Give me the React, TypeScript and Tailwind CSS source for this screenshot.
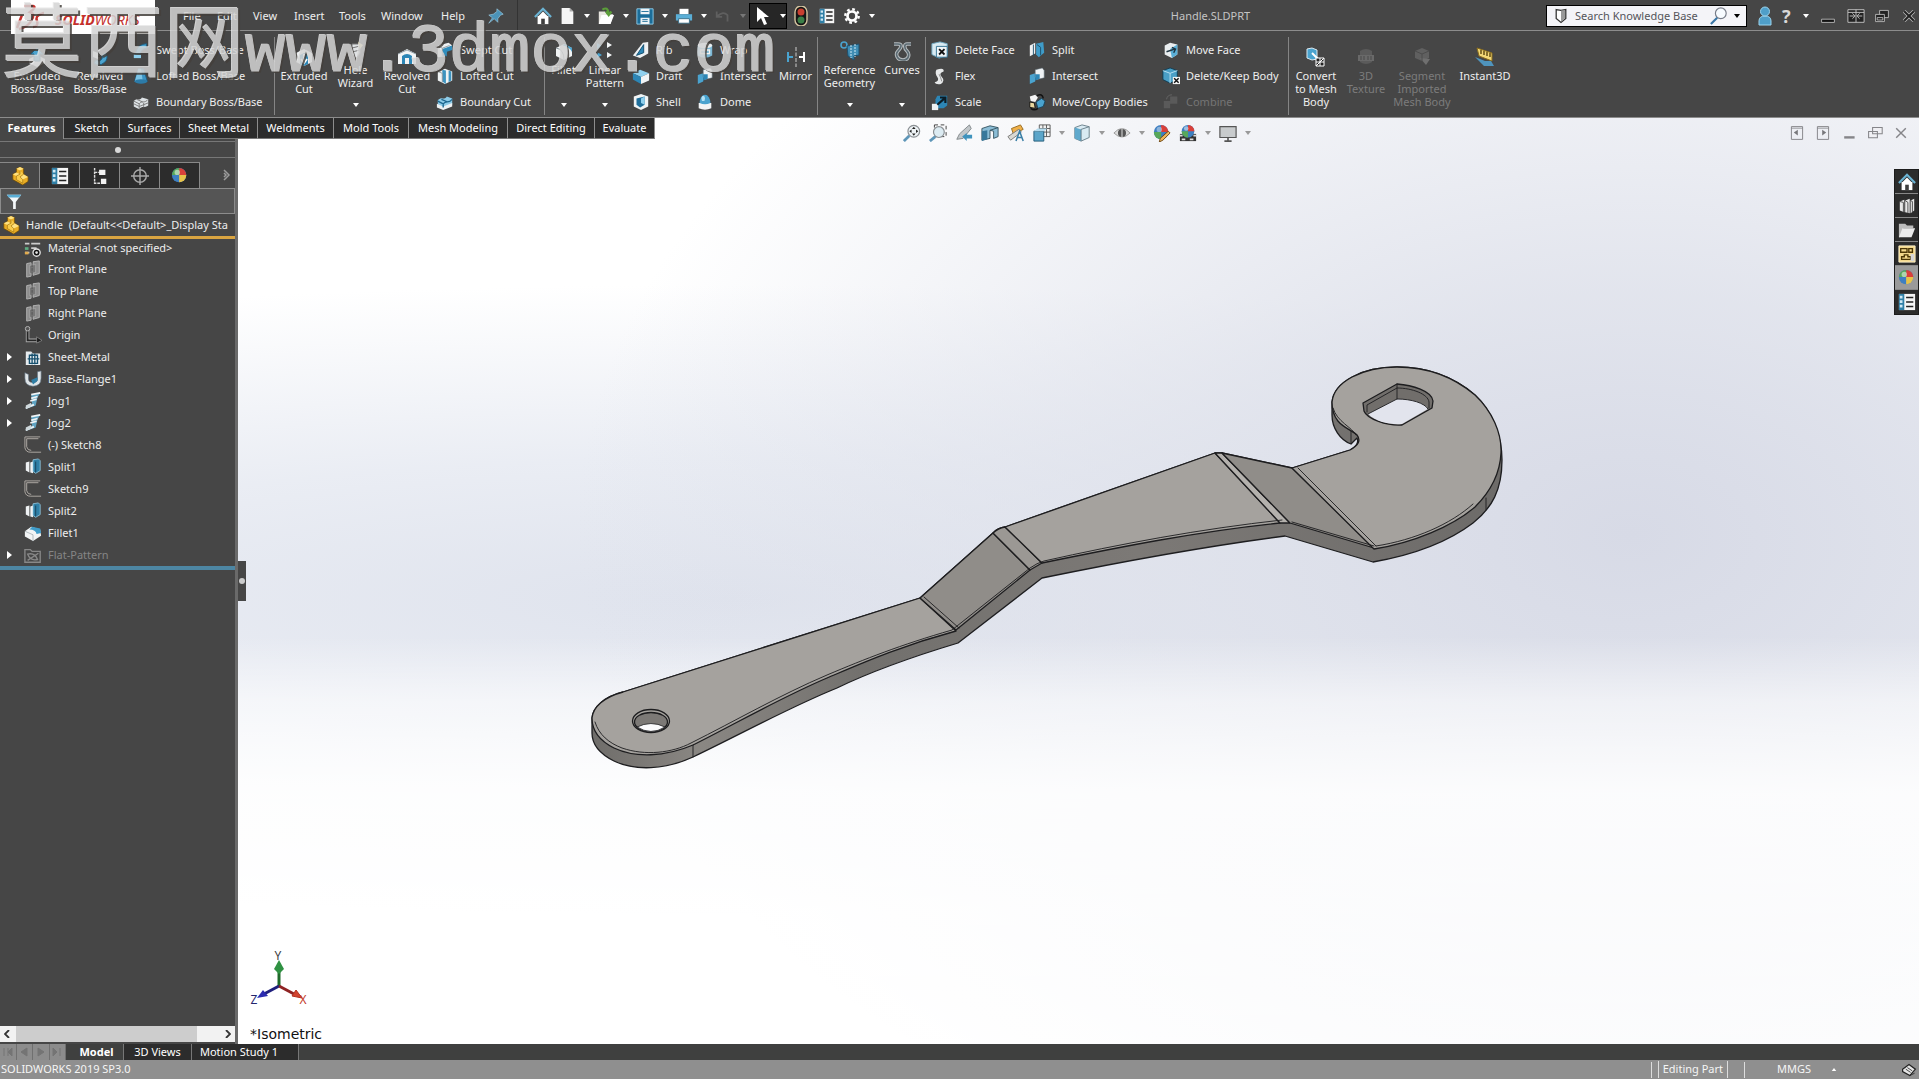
import React from "react";

const ICONS: Record<string, React.ReactNode> = {
  extrude: (
    <>
      <path d="M2 12l8-4 8 4v4l-8 4-8-4z" fill="#e9edf0" />
      <path d="M10 1l6 6h-3v7H7V7H4z" fill="#4aa3cf" stroke="#1c5f83" />
    </>
  ),
  revolve: (
    <>
      <path d="M4 16a8 8 0 0 0 12-10l-4 2a4 4 0 0 1-6 5z" fill="#4aa3cf" stroke="#1c5f83" />
      <path d="M9 1v18" stroke="#dff0f8" strokeDasharray="3 1.5" />
      <path d="M3 4l5 2v6l-5-2z" fill="#eef2f4" />
    </>
  ),
  sweep: (
    <>
      <path d="M4 17c0-9 4-13 12-14v5c-5 1-7 4-7 10z" fill="#4aa3cf" stroke="#1c5f83" />
      <path d="M2 15h8v4H2z" fill="#8fd0ee" />
    </>
  ),
  loft: (
    <>
      <path d="M7 2h6l4 14H3z" fill="#3b94c4" stroke="#1c5f83" />
      <path d="M10 2l2 14H3l4-14z" fill="#7cc4e6" />
      <ellipse cx="10" cy="16" rx="7" ry="2.5" fill="#2c7ba8" />
    </>
  ),
  boundary: (
    <>
      <path d="M2 9c4-5 6 1 9-4l7 2v7c-4 3-7 0-10 4l-6-3z" fill="#dde2e5" />
      <path d="M2 9l6 3c3-4 6 0 10-5M8 12v6M5 7l7 3M13 11v5M2 12l6 3 10-4" stroke="#777" fill="none" />
    </>
  ),
  extrudeCut: (
    <>
      <path d="M2 6l8-4 8 4v9l-8 4-8-4z" fill="#eef1f3" />
      <path d="M6 17V8l4-2 4 2v9l-4 2z" fill="#2c86b6" />
      <path d="M10 7v8M7 12l3 4 3-4" stroke="#fff" strokeWidth="2" fill="none" />
    </>
  ),
  hole: (
    <>
      <path d="M6 3h8v9l-4 6-4-6z" fill="#dfe2e4" stroke="#777" />
      <path d="M6 7l8-2M6 11l8-2" stroke="#777" />
      <path d="M12 1l5 3-3 4z" fill="#e6d894" />
    </>
  ),
  revolveCut: (
    <>
      <path d="M1 7l9-5 9 5v10h-4v-6h-2v6H7v-6H5v6H1z" fill="#f2f4f5" />
      <path d="M5 17V9q5-4 10 0v8h-3v-6H8v6z" fill="#2c86b6" />
      <path d="M1 7l9-4 9 4" stroke="#97a4ab" fill="none" />
    </>
  ),
  sweptCut: (
    <>
      <path d="M2 5l12-3 4 3-6 3-1 9-9 1z" fill="#eef1f3" />
      <path d="M7 17V9l11-4v5l-6 2v5z" fill="#2f8dbd" />
      <path d="M2 5l5 3v9M7 8l8-3" stroke="#8a969c" fill="none" />
    </>
  ),
  loftCut: (
    <>
      <path d="M2 5l8-3 8 3v10l-8 4-8-4z" fill="#f0f3f4" />
      <path d="M7 3l4 1v15l-4-3zM14 4l3 1v10l-3 2z" fill="#3d93bf" />
      <path d="M2 5l5 2v10" stroke="#8d999e" fill="none" />
    </>
  ),
  boundaryCut: (
    <>
      <path d="M2 8c5-5 7 1 10-4l6 2v7c-4 3-7 0-10 4l-6-3z" fill="#8dcbe8" />
      <path d="M1 12l7 3 10-4v4l-10 4-7-3z" fill="#eef1f3" />
      <path d="M2 9l6 3c3-4 6 0 10-5M6 7l7 3M8 12v4" stroke="#1e678f" fill="none" strokeWidth="1.5" />
    </>
  ),
  fillet: (
    <>
      <path d="M2 7l8-4 8 4v8l-8 4-8-4z" fill="#f1f4f5" />
      <path d="M8 4l3-1 7 4v4q-2-5-10-7z" fill="#4aa3cf" />
      <path d="M2 7q8 1 8 12" stroke="#8a969c" fill="none" />
    </>
  ),
  linear: (
    <>
      <path d="M2 2l5 3-5 3zM2 11l5 3-5 3z" fill="#4aa3cf" />
      <path d="M12 1l5 3-5 3zM12 11l5 3-5 3z" fill="#f4f6f7" />
    </>
  ),
  rib: (
    <>
      <path d="M12 2l6-1v13l-9 5-8-3z" fill="#eef1f3" />
      <path d="M13 4v9l-8 3z" fill="#2c86b6" stroke="#0f4a6a" />
    </>
  ),
  draft: (
    <>
      <path d="M1 7l8-4 10 4-9 4z" fill="#8fd0ee" />
      <path d="M1 7l9 4v8l-9-5z" fill="#2c86b6" />
      <path d="M10 11l9-4v8l-9 4z" fill="#f1f4f5" />
    </>
  ),
  shell: (
    <>
      <path d="M2 4l8-3 8 3v11l-8 4-8-4z" fill="#f1f4f5" />
      <path d="M5 6l9-2v9l-5 3-4-3z" fill="#1f6f9b" />
      <path d="M10 6l4-2v9l-4-2z" fill="#8fd0ee" />
    </>
  ),
  wrap: (
    <>
      <path d="M2 5h16v11q-8 5-16 0z" fill="#7db9d6" />
      <ellipse cx="10" cy="5" rx="8" ry="3" fill="#e8edf0" />
      <path d="M5 10h10v4H5z" fill="none" stroke="#f5f5f5" strokeWidth="1.5" />
    </>
  ),
  intersect: (
    <>
      <path d="M2 9l6-2v9l-6 3z" fill="#4aa3cf" />
      <path d="M8 3l8-2 2 3v8l-8 2-2-3z" fill="#eff2f4" stroke="#5b6b73" strokeWidth=".6" />
      <path d="M8 8h5v5l-5 2z" fill="#2c86b6" />
    </>
  ),
  dome: (
    <>
      <path d="M3 11h14v6q-7 3-14 0z" fill="#f2f4f5" />
      <path d="M4 11a6 9 0 0 1 12 0q-6 3-12 0z" fill="#4aa3cf" />
      <ellipse cx="8" cy="6" rx="2" ry="3" fill="#b4e2f5" />
    </>
  ),
  mirror: (
    <>
      <path d="M1 5h2v4h4v2H3v4H1z" fill="#4aa3cf" />
      <path d="M19 5h-2v4h-4v2h4v4h2z" fill="#fff" />
      <path d="M10 0v20" stroke="#ccc" strokeDasharray="4 1.5" />
    </>
  ),
  refgeo: (
    <>
      <circle cx="4" cy="4" r="3" fill="none" stroke="#4aa3cf" strokeWidth="1.6" />
      <path d="M7 5l12-2v11l-5 1v4l-6-4z" fill="#3f8db4" stroke="#1d5170" />
      <path d="M11 4v13M15 3v13" stroke="#cfe9f5" strokeDasharray="2 1" />
    </>
  ),
  curves: (
    <>
      <path d="M2 3h4c5 0 3 4 0 7s-1 9 5 9 7-6 4-9-3-7 0-7h4" fill="none" stroke="#b5bbbe" strokeWidth="3.6" />
      <path d="M2 3h4c5 0 3 4 0 7s-1 9 5 9 7-6 4-9-3-7 0-7h4" fill="none" stroke="#5b6a72" strokeWidth="1.6" />
    </>
  ),
  deleteFace: (
    <>
      <path d="M1 3l9-2 8 2v13l-9 3-8-4z" fill="#d8eaf2" stroke="#6fa9c4" />
      <path d="M6 6h12v12H6z" fill="#eef4f7" stroke="#2c6d8f" />
      <path d="M9 9l6 6M15 9l-6 6" stroke="#111" strokeWidth="2" />
    </>
  ),
  flex: (
    <>
      <path d="M6 3q9-3 8 2-6 2-2 6t-1 8q-6 1-7-2 6-2 3-6T6 3z" fill="#e6e8e9" />
      <path d="M9 8q2 4 3 8" stroke="#888" fill="none" />
    </>
  ),
  scale: (
    <>
      <path d="M7 3h11v11l-4 3H5V7z" fill="#2c86b6" />
      <path d="M1 12h7v7H1z" fill="#eef1f3" />
      <path d="M7 13l8-7M10 5h6v6" stroke="#0b1c26" strokeWidth="2.4" fill="none" />
    </>
  ),
  split: (
    <>
      <path d="M2 5l6-3v12l-6 3z" fill="#eef1f3" />
      <path d="M9 3l8-2 1 12-6 5-3-3z" fill="#3f9cc9" />
      <path d="M10 4l4 3v9M6 4v12" stroke="#1b4e69" fill="none" />
    </>
  ),
  moveBodies: (
    <>
      <path d="M2 4l6-2 3 3-3 5-5-1z" fill="#f5f5f5" />
      <path d="M9 10l6-4 4 3-2 6-6 2z" fill="#4aa3cf" stroke="#17435a" />
      <path d="M2 10l5 1 1 6-6-1z" fill="#e8d7a0" stroke="#111" />
      <path d="M10 3q6-3 7 3M3 17q4 3 8 0" stroke="#111" strokeWidth="1.6" fill="none" />
    </>
  ),
  moveFace: (
    <>
      <path d="M3 5l6-3 8 2v11l-6 4-8-4z" fill="#e9edef" />
      <path d="M9 9l8-5v11l-6 4z" fill="#5aaed6" />
      <path d="M5 12l9-3M11 7l4 2-2 4" stroke="#1d3441" strokeWidth="1.6" fill="none" />
    </>
  ),
  keepBody: (
    <>
      <path d="M1 4l8-3 8 3v10l-8 4-8-4z" fill="#4a9fc6" stroke="#0f3c54" />
      <path d="M1 4l8 3 8-3M9 7v11" stroke="#bfe4f4" fill="none" />
      <path d="M12 11h8v8h-8z" fill="#f5f5f5" />
      <path d="M13.500 12.500l5 5M18.500 12.500l-5 5" stroke="#111" strokeWidth="1.600" />
    </>
  ),
  combine: (
    <>
      <path d="M2 9h7v8H2zM9 4h8v8H9z" fill="#5a5a5a" />
      <path d="M5 7q1-5 6-5" stroke="#666" fill="none" />
    </>
  ),
  convert: (
    <>
      <path d="M1 2l5-1 5 2v9l-5 1-5-2z" fill="#4aa3cf" stroke="#dceaf1" />
      <path d="M6 6l6 6" stroke="#fff" strokeWidth="2" />
      <path d="M10 11h8v8h-8z" fill="#222" stroke="#fff" />
      <path d="M10 19l8-8M14 11v8M10 15h8" stroke="#fff" />
    </>
  ),
  texture: (
    <>
      <path d="M4 4q6-4 12 0v11q-6 4-12 0z" fill="#5b5b5b" />
      <path d="M2 8h16v6H2z" fill="#696969" />
      <path d="M5 9v4M8 9v4M12 9v4M15 9v4" stroke="#4a4a4a" />
    </>
  ),
  segment: (
    <>
      <path d="M3 4l7-3 7 3v7l-7 3-7-3z" fill="#606060" />
      <path d="M8 11l6 7 4-6z" fill="#6f6f6f" />
      <path d="M3 4l7 3 7-3M10 7v7" stroke="#4c4c4c" fill="none" />
    </>
  ),
  instant: (
    <>
      <path d="M2 1l15 5v8L4 9z" fill="#f2d877" stroke="#8a6d1c" />
      <path d="M6 3v4M9 4v4M12 5v4M15 6v4" stroke="#5b450b" strokeWidth="1.4" />
      <path d="M0 10l10 4h6l3 5H9l-5-5z" fill="#4f94bd" />
    </>
  ),
  home: (
    <>
      <path d="M4 10h12v9H4z" fill="#fff" />
      <path d="M4 11l6-6 6 6z" fill="#fff" />
      <path d="M1 11l9-9 9 9" fill="none" stroke="#6bb3d3" strokeWidth="2.400" />
      <path d="M8 13h4v6H8z" fill="#3e3e3e" />
    </>
  ),
  doc: (
    <>
      <path d="M4 1h9l4 4v14H4z" fill="#f5f5f5" />
      <path d="M13 1v4h4" fill="#aaa" />
    </>
  ),
  open: (
    <>
      <path d="M2 5h7l2 3h7l-3 11H2z" fill="#e8e6e0" />
      <path d="M5 9h14l-4 10H2z" fill="#fff" />
      <path d="M6 3q6-4 7 4M10 5l3 4 3-4" stroke="#5b9e3a" strokeWidth="2.4" fill="none" />
    </>
  ),
  save: (
    <>
      <path d="M1 2h18v17H1z" fill="#1b6d99" stroke="#8fd0ee" />
      <path d="M5 2h10v6H5zM5 12h10v7H5z" fill="#eef3f6" />
      <path d="M7 14h6M7 16h6M6 5h8" stroke="#1b6d99" />
    </>
  ),
  print: (
    <>
      <path d="M5 2h10v6H5z" fill="#fff" />
      <path d="M1 8h18v7H1z" fill="#5aaed6" />
      <path d="M4 13h12v5H4z" fill="#fff" stroke="#356d87" />
    </>
  ),
  undo: <path d="M3 5v6h6M4 10q6-6 11-1v7" stroke="#5f5f5f" strokeWidth="2" fill="none" />,
  cursor: <path d="M5 1v15l4-4 3 7 3-1-3-7h5z" fill="#fff" />,
  traffic: (
    <>
      <rect x="4" y="0" width="12" height="20" rx="6" fill="#161616" stroke="#d3c49f" strokeWidth="1.400" />
      <circle cx="10" cy="6" r="3.5" fill="#c93f30" />
      <circle cx="10" cy="14" r="3.5" fill="#3b7f47" />
    </>
  ),
  list: (
    <>
      <path d="M1 1h18v18H1z" fill="#f5f5f5" />
      <path d="M1 1h6v18H1z" fill="#2f7fa6" />
      <path d="M2 3h3v3H2zM2 8h3v3H2zM2 13h3v3H2z" fill="#cfe8f3" />
      <path d="M9 5h8M9 10h8M9 15h8" stroke="#222" strokeWidth="1.600" />
    </>
  ),
  gear: (
    <>
      <circle cx="10" cy="10" r="5" fill="none" stroke="#fff" strokeWidth="3" />
      <circle cx="10" cy="10" r="7.500" fill="none" stroke="#fff" strokeWidth="2.600" strokeDasharray="3 2.890" />
    </>
  ),
  pin: <path d="M11 2l7 6-3 1-3 4 0 4-4-4-6 5 4-6-4-3 5-1 4-3z" fill="#4b93b8" stroke="#9fcfe5" strokeWidth=".7" />,
  user: (
    <>
      <path d="M4 19v-4q0-5 6-5t6 5v4z" fill="#4f9fc9" stroke="#9bd4ee" />
      <circle cx="10" cy="5.500" r="4.500" fill="#4f9fc9" stroke="#9bd4ee" />
    </>
  ),
  minimize: <path d="M2 14h16v4H2z" fill="#111" stroke="#ccc" />,
  span: (
    <>
      <path d="M1 3h18v14H1z" fill="#222" stroke="#c8c8c8" />
      <path d="M10 3v14M3 10h5M17 10h-5M6 7l3 3-3 3M14 7l-3 3 3 3M1 6h18" stroke="#c8c8c8" fill="none" />
    </>
  ),
  restore: (
    <>
      <path d="M7 3h11v9H7z" fill="#222" stroke="#ccc" />
      <path d="M2 8h11v9H2z" fill="#222" stroke="#ccc" />
      <path d="M4 12h7v3H4z" fill="none" stroke="#ccc" />
    </>
  ),
  close: (
    <>
      <path d="M4 4l12 12M16 4L4 16" stroke="#bbb" strokeWidth="4.500" />
      <path d="M4 4l12 12M16 4L4 16" stroke="#222" strokeWidth="2.500" />
    </>
  ),
  shield: (
    <>
      <path d="M4 2l6 1 6-1v11l-6 5-6-5z" fill="#fff" stroke="#333" strokeWidth="1.600" />
      <path d="M10 3v14l5-4V3z" fill="#999" />
    </>
  ),
  magnifier: (
    <>
      <circle cx="12" cy="7" r="6" fill="#f7fbff" stroke="#777c88" strokeWidth="1.300" />
      <path d="M8 12l-7 7" stroke="#3a76a6" strokeWidth="2.400" />
    </>
  ),
  zoomFit: (
    <>
      <circle cx="12" cy="8" r="6.500" fill="#eef3f6" stroke="#8a8f93" strokeWidth="1.300" />
      <path d="M12 3l2 2.500h-4zM12 13l2-2.500h-4zM7 8l2.500-2v4zM17 8l-2.500-2v4z" fill="#222" />
      <path d="M7 13l-6 6" stroke="#5e96b8" strokeWidth="3" />
    </>
  ),
  zoomArea: (
    <>
      <path d="M6 1h13v13H6z" fill="none" stroke="#333" strokeDasharray="4 3" />
      <circle cx="11" cy="9" r="6" fill="#dcebf2" stroke="#8a8f93" strokeWidth="1.300" />
      <path d="M7 14l-6 5" stroke="#5e96b8" strokeWidth="3" />
    </>
  ),
  prevView: (
    <>
      <path d="M16 1l2 4-9 11-7 1 3-6z" fill="#c2c7ca" stroke="#7e8487" />
      <path d="M19 12v4h-6v3l-5-5 5-4v2z" fill="#3f93bd" />
    </>
  ),
  section: (
    <>
      <path d="M1 5l9-3 9 2v10l-5 2v-8l-4-1v9l-9 2z" fill="#8bbdd6" stroke="#33515f" />
      <path d="M1 8l6-1v10l-6 2z" fill="#38789b" />
      <path d="M10 7l9-3" stroke="#33515f" />
    </>
  ),
  dynamic: (
    <>
      <path d="M5 5l10-4 3 5-11 5z" fill="#efb049" stroke="#94661a" />
      <path d="M1 14l12-8 3 3-12 9z" fill="#d8d8d3" stroke="#777" />
      <path d="M10 19l4-11 4 11M11.500 15h5" stroke="#3a7fa6" fill="none" strokeWidth="1.700" />
    </>
  ),
  orient: (
    <>
      <path d="M7 1h12v13H7zM7 5h12M7 9h12M11 1v13M15 1v13" fill="#f2f2f2" stroke="#555" />
      <path d="M1 8h11v11H1z" fill="#5ba5c9" stroke="#235a77" />
      <path d="M1 8l4-3h11l-4 3z" fill="#b4dbee" />
    </>
  ),
  cube: (
    <>
      <path d="M2 4l8-3 8 2v12l-9 4-7-3z" fill="#d9eaf2" stroke="#647a86" />
      <path d="M2 4l7 2v13l-7-3z" fill="#5fa9cd" />
      <path d="M9 6l9-3M9 6v13" stroke="#647a86" />
    </>
  ),
  eye: (
    <>
      <path d="M1 10q9-10 18 0-9 9-18 0z" fill="#dcdcdc" stroke="#999" />
      <circle cx="10" cy="10" r="4.500" fill="#555" />
      <path d="M10 5v10" stroke="#eee" />
    </>
  ),
  appearance: (
    <>
      <circle cx="9" cy="9" r="8" fill="#3e7fc1" />
      <path d="M9 9V1a8 8 0 0 1 8 8z" fill="#d9403a" />
      <path d="M9 9H1a8 8 0 0 1 8-8z" fill="#58a85a" />
      <path d="M9 9l8 0a8 8 0 0 1-8 8z" fill="#e7c24a" />
      <circle cx="7" cy="6" r="3" fill="#fff" opacity=".5" />
    </>
  ),
  pencil: (
    <>
      <circle cx="9" cy="9" r="8" fill="#3e7fc1" />
      <path d="M9 9V1a8 8 0 0 1 8 8z" fill="#d9403a" />
      <path d="M9 9H1a8 8 0 0 0 8 8z" fill="#58a85a" />
      <circle cx="7" cy="6" r="3" fill="#fff" opacity=".4" />
      <path d="M17 8l2 2-8 8-4 2 1-4z" fill="#f0b75b" stroke="#6b4310" />
    </>
  ),
  scene: (
    <>
      <path d="M1 11h18v8H1z" fill="#333" />
      <path d="M3 16h4v2H3zM12 16h4v2h-4zM1 12h3v2H1zM16 12h3v2h-3z" fill="#ddd" />
      <circle cx="10" cy="8" r="7" fill="#3e7fc1" />
      <path d="M10 8V1a7 7 0 0 1 7 7z" fill="#d9403a" />
      <path d="M10 8H3a7 7 0 0 0 7 7z" fill="#58a85a" />
      <circle cx="8" cy="5" r="2.500" fill="#fff" opacity=".5" />
    </>
  ),
  monitor: (
    <>
      <path d="M1 3h18v12H1z" fill="#c8cbcd" stroke="#555" strokeWidth="1.300" />
      <path d="M10 15v3M6 19h8" stroke="#555" strokeWidth="1.800" />
    </>
  ),
  paneLeft: (
    <>
      <path d="M3 2h14v16H3z" fill="none" stroke="#858589" strokeWidth="1.200" />
      <path d="M11 6v7l-5-3.500z" fill="#77777b" />
      <path d="M3 4h14" stroke="#858589" />
    </>
  ),
  paneRight: (
    <>
      <path d="M3 2h14v16H3z" fill="none" stroke="#858589" strokeWidth="1.200" />
      <path d="M9 6v7l5-3.500z" fill="#77777b" />
      <path d="M3 4h14" stroke="#858589" />
    </>
  ),
  docMin: <path d="M4 14h13v3H4z" fill="#858589" />,
  docRestore: <path d="M7 3h12v8H7zM2 8h11v8H2z" fill="#f0f0f4" stroke="#858589" strokeWidth="1.300" />,
  docClose: <path d="M4 4l12 12M16 4L4 16" stroke="#858589" strokeWidth="1.800" />,
  part: (
    <>
      <path d="M2 8l4-2V2l4-2 4 2v6l5 3v5l-6 4-11-6z" fill="#e9ad25" stroke="#6f4b06" strokeWidth=".8" />
      <path d="M6 2l4-2 4 2-4 2zM2 8l4-2 4 2-4 2zM10 11l4-3 5 3-6 3z" fill="#ffe17f" />
      <path d="M10 4v4l-4 2v4l7 4v-4l-3-3 4-3" fill="#f8cc4c" stroke="#8f6409" strokeWidth=".6" />
    </>
  ),
  config: (
    <>
      <path d="M4 1v17h6M4 6h6" stroke="#ddd" fill="none" strokeWidth="1.600" strokeDasharray="3 1" />
      <path d="M9 3h7v6H9zM11 13h6v6h-6z" fill="#f2f2f2" />
    </>
  ),
  target: (
    <>
      <circle cx="10" cy="10" r="7" fill="none" stroke="#a9a9a9" strokeWidth="1.600" />
      <path d="M10 0v20M0 10h20" stroke="#a9a9a9" strokeWidth="1.600" />
    </>
  ),
  funnel: (
    <>
      <path d="M2 3h16l-6 8v8h-3v-8z" fill="#f4f8fa" />
      <path d="M2 3h16l-2 3H4z" fill="#5aaed6" />
    </>
  ),
  material: (
    <>
      <path d="M1 4h5M8 4h10M8 9h6M1 14h5" stroke="#ccc" strokeWidth="2" />
      <path d="M1 8h4v3H1z" fill="#5eae82" />
      <path d="M1 13h4v3H1z" fill="#e2ab4d" />
      <circle cx="14" cy="14" r="4" fill="#111" stroke="#e4e4e4" strokeWidth="1.500" />
      <circle cx="14" cy="14" r="1.500" fill="#e4e4e4" />
    </>
  ),
  plane: (
    <>
      <path d="M3 4l5-1v15l-5 1zM10 2l7-1v14l-7 2z" fill="#8c8c8c" stroke="#b8b8b8" />
      <path d="M6 6l7-1v9l-7 1z" fill="#777" stroke="#aaa" strokeWidth=".8" />
      <path d="M9 1v18" stroke="#505050" strokeDasharray="3 1" />
    </>
  ),
  origin: (
    <>
      <path d="M4 3v13h13" stroke="#a8a8a8" strokeWidth="4" fill="none" />
      <path d="M4 3v13h13" stroke="#262626" strokeWidth="2" fill="none" />
      <circle cx="4" cy="3" r="2.500" fill="#555" stroke="#bbb" />
      <path d="M14 12l6 4-6 3z" fill="#1c1c1c" stroke="#a8a8a8" strokeWidth=".6" />
    </>
  ),
  sheet: (
    <>
      <path d="M2 4h6l2 2h8v13H2z" fill="#e6ebee" />
      <path d="M6 8h9v9H6zM9 6v12M12 6v12M4 12h13" stroke="#17506e" fill="none" strokeWidth="1.500" />
    </>
  ),
  flange: (
    <>
      <path d="M1 3v6q0 9 9 9t9-9V1l-4 1v8q0 4-5 4t-5-4V5z" fill="#dfe5e8" stroke="#678" strokeWidth=".7" />
      <path d="M8 11l7-3v4l-5 4z" fill="#2f7fa6" />
    </>
  ),
  jog: (
    <>
      <path d="M8 3l10-2-3 5-2 9-11 4 1-3 6-3z" fill="#5fa3c2" />
      <path d="M8 3l10-2M8 7l7-2M7 10l7-2M2 18l9-4" stroke="#f0f4f6" strokeWidth="2" />
      <path d="M2 15l6-3v4l-6 3z" fill="#cfd8dc" />
    </>
  ),
  sketch: <path d="M18 1H1v12q1 5 6 5h12M16 3H3v9q1 4 5 4" stroke="#b5b0aa" fill="none" />,
  splitTree: (
    <>
      <path d="M2 5l4-1v12l-4-2zM7 5l3-1v13l-3-1z" fill="#eef1f3" />
      <path d="M10 2l6-1 2 2v11l-5 3-3-2z" fill="#2f7fa6" stroke="#9fd2ea" strokeWidth=".8" />
      <path d="M13 4v12" stroke="#163f57" />
    </>
  ),
  filletTree: (
    <>
      <path d="M1 8l7-5 10 3 1 7-9 6-9-5z" fill="#f2f4f5" />
      <path d="M9 3l9 2 1 5-5 1q-1-5-8-5z" fill="#3f9cc9" />
      <path d="M1 8l9 4v7" stroke="#adb6ba" fill="none" />
    </>
  ),
  flat: (
    <>
      <path d="M1 4h6l2 2h9v12H1z" fill="none" stroke="#888" strokeWidth="1.500" />
      <path d="M4 9q8-2 11 6-8 2-11-6zM4 16l12-8" stroke="#888" fill="none" strokeWidth="1.500" />
    </>
  ),
  library: (
    <>
      <path d="M2 5l5-2v14l-5-2zM8 4l5-2v16l-5-1zM14 4l4-2v13l-4 3z" fill="#e8e8e8" />
      <path d="M2 5l4 1v11M8 4l3 2v12M14 4l2 1v12" stroke="#444" fill="none" />
    </>
  ),
  folder: (
    <>
      <path d="M1 3h7l2 2h7v3H6L2 18H1z" fill="#bdbdbd" />
      <path d="M5 8h14l-4 10H1z" fill="#ececec" />
    </>
  ),
  palette: (
    <>
      <path d="M1 1h18v18H1z" fill="#f3d88b" stroke="#fff4cf" />
      <path d="M3 4h7v4H3zM12 4h4v4h-4zM4 16v-3h3v-2h4v2h3v3z" fill="none" stroke="#4a3505" strokeWidth="1.500" />
      <path d="M14 10h4v8h-4z" fill="#d6d6d6" />
    </>
  ),
  tag: (
    <>
      <path d="M2 9l8-6 8 6-7 8-9-5z" fill="#e5e5e5" stroke="#222" strokeWidth="1.500" />
      <path d="M6 9l6 4M8 7l6 4M11 17l6-3" stroke="#222" />
    </>
  ),
};

function Icon({ name, className = "size-5" }: { name: string; className?: string }) {
  return (
    <svg viewBox="0 0 20 20" fill="none" aria-hidden="true" className={`shrink-0 ${className}`}>
      {ICONS[name]}
    </svg>
  );
}

function Caret({ className = "text-white" }: { className?: string }) {
  return (
    <svg viewBox="0 0 6 4" aria-hidden="true" className={`h-[4px] w-[6px] shrink-0 ${className}`}>
      <path d="M0 0h6L3 4z" fill="currentColor" />
    </svg>
  );
}

type Big = { icon: string; lines: string[]; width: string; raised?: boolean; caret?: boolean; disabled?: boolean };

function BigTool({ icon, lines, width, raised, caret, disabled }: Big) {
  return (
    <button
      disabled={disabled}
      className={`flex h-full shrink-0 flex-col items-center ${width} ${raised ? "pt-2.5" : "pt-4"} ${
        disabled ? "text-[#7c7c7c]" : "text-[#eeeeee]"
      }`}
    >
      <Icon name={icon} />
      <span className="mt-0.5 flex flex-col items-center leading-[13px] whitespace-nowrap">
        {lines.map((l) => (
          <span key={l}>{l}</span>
        ))}
      </span>
      {caret && (
        <span className="mt-auto mb-2.5">
          <Caret />
        </span>
      )}
    </button>
  );
}

type Small = [icon: string, label: string, disabled?: boolean];

function ToolColumn({ items, width }: { items: Small[]; width: string }) {
  return (
    <div className={`flex h-full shrink-0 flex-col pt-1.5 ${width}`}>
      {items.map(([icon, label, disabled]) => (
        <button
          key={label}
          disabled={disabled}
          className={`flex h-[26px] items-center gap-1.5 whitespace-nowrap ${disabled ? "text-[#757575]" : "text-[#eeeeee]"}`}
        >
          <Icon name={icon} className="size-[18px]" />
          {label}
        </button>
      ))}
    </div>
  );
}

const Divider = () => <div className="mt-1.5 h-[78px] w-px shrink-0 bg-[#858585]" />;

function TitleBar() {
  const menus: [string, string][] = [
    ["File", "w-[34px]"],
    ["Edit", "w-[36px]"],
    ["View", "w-[41px]"],
    ["Insert", "w-[45px]"],
    ["Tools", "w-[42px]"],
    ["Window", "w-[60px]"],
    ["Help", "w-[46px]"],
  ];
  const quick: [string, string, boolean][] = [
    ["home", "Home", false],
    ["doc", "New", true],
    ["open", "Open", true],
    ["save", "Save", true],
    ["print", "Print", true],
    ["undo", "Undo", true],
  ];
  return (
    <header className="flex h-[31px] shrink-0 items-center border-b border-[#8c8c8c] pt-0.5">
      <div className="relative z-10 -mt-0.5 ml-[11px] flex h-[34px] w-[144px] shrink-0 items-center gap-2.5 self-start bg-white pl-1">
        <svg viewBox="0 0 30 28" className="h-7 w-[30px]" aria-hidden="true">
          <path
            d="M9 3h9q4 1-3 6 6 2 1 9-3 6-12 8M7 12l-5 13M18 24q6-1 4-6t4-7q2-1 3-1"
            fill="none"
            stroke="#c5302c"
            strokeWidth="2.500"
          />
        </svg>
        <span className="mt-1.5 text-sm font-bold text-[#c5302c] italic">
          SOLID<span className="font-normal">WORKS</span>
        </span>
      </div>
      <nav className="ml-[28px] flex shrink-0">
        {menus.map(([m, w]) => (
          <button key={m} className={`text-left ${w}`}>
            {m}
          </button>
        ))}
      </nav>
      <button aria-label="Pin menu" className="w-[30px]">
        <Icon name="pin" className="size-[18px]" />
      </button>
      <div className="-mt-0.5 h-[30px] w-px bg-[#333333]" />
      <div className="ml-4 flex shrink-0 items-center">
        {quick.map(([icon, label, caret]) => (
          <button key={icon} aria-label={label} className={`flex items-center ${caret ? "w-[39px] gap-2" : "w-[24px]"}`}>
            <Icon name={icon} className="size-[18px]" />
            {caret && <Caret className={icon === "undo" ? "text-[#777777]" : "text-white"} />}
          </button>
        ))}
      </div>
      <button
        aria-label="Select"
        className="-ml-1 flex h-[26px] w-[38px] shrink-0 items-center gap-2 border border-black bg-[#262626] pl-0.5"
      >
        <Icon name="cursor" />
        <Caret />
      </button>
      <button aria-label="Rebuild" className="ml-1 shrink-0">
        <Icon name="traffic" />
      </button>
      <button aria-label="File properties" className="ml-2 shrink-0">
        <Icon name="list" className="size-4" />
      </button>
      <button aria-label="Options" className="ml-2 flex shrink-0 items-center gap-2">
        <Icon name="gear" className="size-[18px]" />
        <Caret />
      </button>
      <h1 className="flex-1 text-center text-[#c4c4c4]">Handle.SLDPRT</h1>
      <label className="flex h-[22px] w-[201px] shrink-0 items-center gap-1.5 border border-black bg-[#f4f4f8] px-1.5">
        <Icon name="shield" className="size-4" />
        <input
          aria-label="Search Knowledge Base"
          placeholder="Search Knowledge Base"
          className="min-w-0 flex-1 bg-transparent text-black outline-none placeholder:text-[#55555a]"
        />
        <Icon name="magnifier" className="size-[18px]" />
        <Caret className="text-black" />
      </label>
      <div className="flex shrink-0 items-center pl-2">
        <button aria-label="Log in" className="w-[27px]">
          <Icon name="user" />
        </button>
        <button aria-label="Help topics" className="flex w-[38px] items-center gap-3 text-lg leading-none font-bold text-[#d8d8d8]">
          ?<Caret />
        </button>
        <button aria-label="Minimize" className="w-[27px]">
          <Icon name="minimize" className="size-4" />
        </button>
        <button aria-label="Span displays" className="w-[27px]">
          <Icon name="span" className="size-[18px]" />
        </button>
        <button aria-label="Restore" className="w-[27px]">
          <Icon name="restore" className="size-4" />
        </button>
        <button aria-label="Close" className="w-[18px]">
          <Icon name="close" className="size-4" />
        </button>
      </div>
    </header>
  );
}

function Ribbon() {
  return (
    <section aria-label="Features" className="flex h-[87px] shrink-0 overflow-hidden border-b border-[#8c8c8c]">
      <div className="w-[6px] shrink-0" />
      <BigTool icon="extrude" lines={["Extruded", "Boss/Base"]} width="w-[62px]" />
      <BigTool icon="revolve" lines={["Revolved", "Boss/Base"]} width="w-[64px]" />
      <ToolColumn
        width="w-[142px]"
        items={[
          ["sweep", "Swept Boss/Base"],
          ["loft", "Lofted Boss/Base"],
          ["boundary", "Boundary Boss/Base"],
        ]}
      />
      <Divider />
      <BigTool icon="extrudeCut" lines={["Extruded", "Cut"]} width="w-[58px]" />
      <BigTool icon="hole" lines={["Hole", "Wizard"]} width="w-[45px]" raised caret />
      <BigTool icon="revolveCut" lines={["Revolved", "Cut"]} width="w-[58px]" />
      <ToolColumn
        width="w-[108px]"
        items={[
          ["sweptCut", "Swept Cut"],
          ["loftCut", "Lofted Cut"],
          ["boundaryCut", "Boundary Cut"],
        ]}
      />
      <Divider />
      <BigTool icon="fillet" lines={["Fillet"]} width="w-[37px]" raised caret />
      <BigTool icon="linear" lines={["Linear", "Pattern"]} width="w-[46px]" raised caret />
      <div className="w-[4px] shrink-0" />
      <ToolColumn
        width="w-[64px]"
        items={[
          ["rib", "Rib"],
          ["draft", "Draft"],
          ["shell", "Shell"],
        ]}
      />
      <ToolColumn
        width="w-[78px]"
        items={[
          ["wrap", "Wrap"],
          ["intersect", "Intersect"],
          ["dome", "Dome"],
        ]}
      />
      <BigTool icon="mirror" lines={["Mirror"]} width="w-[43px]" />
      <Divider />
      <BigTool icon="refgeo" lines={["Reference", "Geometry"]} width="w-[63px]" raised caret />
      <BigTool icon="curves" lines={["Curves"]} width="w-[42px]" raised caret />
      <div className="w-[2px] shrink-0" />
      <Divider />
      <div className="w-[5px] shrink-0" />
      <ToolColumn
        width="w-[97px]"
        items={[
          ["deleteFace", "Delete Face"],
          ["flex", "Flex"],
          ["scale", "Scale"],
        ]}
      />
      <ToolColumn
        width="w-[134px]"
        items={[
          ["split", "Split"],
          ["intersect", "Intersect"],
          ["moveBodies", "Move/Copy Bodies"],
        ]}
      />
      <ToolColumn
        width="w-[126px]"
        items={[
          ["moveFace", "Move Face"],
          ["keepBody", "Delete/Keep Body"],
          ["combine", "Combine", true],
        ]}
      />
      <Divider />
      <BigTool icon="convert" lines={["Convert", "to Mesh", "Body"]} width="w-[54px]" />
      <BigTool icon="texture" lines={["3D", "Texture"]} width="w-[46px]" disabled />
      <BigTool icon="segment" lines={["Segment", "Imported", "Mesh Body"]} width="w-[66px]" disabled />
      <BigTool icon="instant" lines={["Instant3D"]} width="w-[60px]" />
    </section>
  );
}

function ViewBar() {
  const tabs: [string, string][] = [
    ["Features", "w-[64px]"],
    ["Sketch", "w-[56px]"],
    ["Surfaces", "w-[60px]"],
    ["Sheet Metal", "w-[78px]"],
    ["Weldments", "w-[76px]"],
    ["Mold Tools", "w-[75px]"],
    ["Mesh Modeling", "w-[99px]"],
    ["Direct Editing", "w-[87px]"],
    ["Evaluate", "w-[60px]"],
  ];
  const views: [string, string, boolean][] = [
    ["zoomFit", "Zoom to Fit", false],
    ["zoomArea", "Zoom to Area", false],
    ["prevView", "Previous View", false],
    ["section", "Section View", false],
    ["dynamic", "Dynamic Annotation Views", false],
    ["orient", "View Orientation", true],
    ["cube", "Display Style", true],
    ["eye", "Hide/Show Items", true],
    ["pencil", "Edit Appearance", false],
    ["scene", "Apply Scene", true],
    ["monitor", "View Settings", true],
  ];
  return (
    <div className="relative flex h-[21px] shrink-0 items-start">
      <div role="tablist" className="flex h-full shrink-0 text-white">
        {tabs.map(([t, w], i) => (
          <button
            key={t}
            role="tab"
            aria-selected={i === 0}
            className={`border-r border-[#8c8c8c] whitespace-nowrap ${w} ${
              i === 0 ? "bg-[#464646] font-bold" : "border-b border-b-[#777777] bg-[#2c2c2c]"
            }`}
          >
            {t}
          </button>
        ))}
      </div>
      <div className="ml-[248px] flex h-[30px] shrink-0 items-center">
        {views.map(([icon, label, caret]) => (
          <button key={icon} aria-label={label} className={`flex shrink-0 items-center gap-2 ${caret ? "w-[40px]" : "w-[26px]"}`}>
            <Icon name={icon} className="size-[18px]" />
            {caret && <Caret className="text-[#999999]" />}
          </button>
        ))}
      </div>
      <div className="mr-[10px] ml-auto flex h-[30px] items-center gap-2.5">
        {["paneLeft", "paneRight", "docMin", "docRestore", "docClose"].map((n) => (
          <button key={n} aria-label={n}>
            <Icon name={n} className="size-4" />
          </button>
        ))}
      </div>
    </div>
  );
}

const TREE: { icon: string; label: string; open?: boolean; muted?: boolean }[] = [
  { icon: "plane", label: "Front Plane" },
  { icon: "plane", label: "Top Plane" },
  { icon: "plane", label: "Right Plane" },
  { icon: "origin", label: "Origin" },
  { icon: "sheet", label: "Sheet-Metal", open: true },
  { icon: "flange", label: "Base-Flange1", open: true },
  { icon: "jog", label: "Jog1", open: true },
  { icon: "jog", label: "Jog2", open: true },
  { icon: "sketch", label: "(-) Sketch8" },
  { icon: "splitTree", label: "Split1" },
  { icon: "sketch", label: "Sketch9" },
  { icon: "splitTree", label: "Split2" },
  { icon: "filletTree", label: "Fillet1" },
  { icon: "flat", label: "Flat-Pattern", open: true, muted: true },
];

function FeatureTree() {
  return (
    <aside className="relative flex w-[238px] shrink-0 flex-col border-r-[3px] border-[#8c8c8c] border-r-[#6a6a6a] bg-[#464646]">
      <div className="mt-0.5 flex h-[17px] shrink-0 items-center justify-center border-y border-[#777777]">
        <span className="size-1.5 rounded-full bg-[#d8d8d8]" />
      </div>
      <div role="tablist" className="mt-1 flex h-[26px] shrink-0 items-stretch">
        {["part", "list", "config", "target", "appearance"].map((n, i) => (
          <button
            key={n}
            role="tab"
            aria-selected={i === 0}
            aria-label={n}
            className={`flex w-10 items-center justify-center border-t border-r border-[#888888] ${i === 0 ? "bg-[#464646]" : "bg-[#2c2c2c]"}`}
          >
            <Icon name={n} className="size-[18px]" />
          </button>
        ))}
        <button aria-label="More tabs" className="mr-1 ml-auto">
          <svg viewBox="0 0 8 12" className="h-3 w-2" aria-hidden="true">
            <path d="M1 1l5 5-5 5M1 4l2 2-2 2" fill="none" stroke="#9b9b9b" strokeWidth="1.500" />
          </svg>
        </button>
      </div>
      <label className="flex h-[26px] shrink-0 items-center border border-[#8c8c8c] bg-[#555555] pl-1">
        <Icon name="funnel" className="size-[18px]" />
        <input aria-label="Filter features" className="min-w-0 flex-1 bg-transparent outline-none" />
      </label>
      <button className="flex h-[22px] shrink-0 items-center gap-1.5 pl-0.5 whitespace-pre">
        <Icon name="part" className="size-[18px]" />
        Handle  (Default&lt;&lt;Default&gt;_Display Sta
      </button>
      <div className="h-[3px] shrink-0 bg-[#d9a441]" />
      <ul>
        <li className="flex h-[19px] items-center gap-1.5 pl-6">
          <Icon name="material" className="size-[18px]" />
          Material &lt;not specified&gt;
        </li>
        {TREE.map((n) => (
          <li key={n.label} className={`flex h-[22px] items-center gap-1.5 ${n.muted ? "text-[#858585]" : ""}`}>
            <span className="-mr-0.5 flex w-5 pl-[7px]">
              {n.open && (
                <svg viewBox="0 0 5 8" className="h-2 w-[5px]" aria-hidden="true">
                  <path d="M0 0l5 4-5 4z" fill="#fff" />
                </svg>
              )}
            </span>
            <Icon name={n.icon} className="size-[18px]" />
            {n.label}
          </li>
        ))}
      </ul>
      <div className="h-1 shrink-0 bg-[#4d86a3]" />
      <div className="mt-auto mb-0.5 flex h-4 items-center justify-between bg-[#f2f2f2] px-1">
        <svg viewBox="0 0 6 8" className="h-2 w-1.5" aria-hidden="true">
          <path d="M5 0L1 4l4 4" fill="none" stroke="#333" strokeWidth="1.800" />
        </svg>
        <div className="mr-7 ml-1.5 h-full flex-1 bg-[#cdcdcd]" />
        <svg viewBox="0 0 6 8" className="h-2 w-1.5" aria-hidden="true">
          <path d="M1 0l4 4-4 4" fill="none" stroke="#333" strokeWidth="1.800" />
        </svg>
      </div>
      <div className="absolute top-[422px] -right-[11px] z-10 flex h-10 w-2 items-center justify-center bg-[#464646]">
        <span className="size-1.5 rounded-full bg-[#cccccc]" />
      </div>
    </aside>
  );
}

function Model() {
  return (
    <svg
      viewBox="238 139 1681 905"
      preserveAspectRatio="xMidYMid slice"
      role="img"
      aria-label="Handle part in isometric view"
      className="h-full w-full"
    >
      <defs>
        <linearGradient id="side" x1="592" x2="1501" y1="0" y2="0" gradientUnits="userSpaceOnUse">
          <stop offset="0" stopColor="#6f6d6a" />
          <stop offset=".12" stopColor="#8a8783" />
          <stop offset=".3" stopColor="#72706d" />
          <stop offset=".6" stopColor="#7c7976" />
          <stop offset="1" stopColor="#6d6b69" />
        </linearGradient>
      </defs>
      <g stroke="#1d1d1f" strokeLinejoin="round" strokeLinecap="round" strokeWidth="1.300">
        <path
          fill="url(#side)"
          d="M623 692L920 598L993 533Q998 528 1005 527L1215 453L1222 453L1292 468L1350 450Q1360 445 1357 438L1351 444C1340 440 1332 428 1332 415L1332 402C1334 382 1362 367 1397 367C1430 367 1455 378 1475 395C1492 411 1502 436 1502 460C1502 490 1492 508 1473 523C1448 542 1413 555 1373 562L1285 536C1200 547 1120 562 1042 578L958 643C905 659 870 672 837 688C790 707 745 732 693 757C665 770 635 771 614 761C600 754 592 745 592 733L592 718C593 707 604 697 623 692Z"
        />
        <path
          fill="#a5a29e"
          d="M623 692L920 598L956 631C900 646 860 664 827 678C780 698 735 724 693 745C665 757 635 758 614 748C600 741 592 731 592 718C593 707 604 697 623 692Z"
        />
        <path fill="#908d89" d="M920 598L993 533L1030 570L956 630Z" />
        <path fill="#9b9894" d="M993 533Q998 528 1005 527L1042 563L1030 570Z" />
        <path fill="#a5a29e" d="M1005 527L1215 453L1280 523C1200 531 1120 547 1042 563Z" />
        <path fill="#b4b1ad" d="M1215 453L1222 453L1290 523L1280 523Z" />
        <path fill="#908d89" d="M1222 453L1292 468L1374 548L1290 523Z" />
        <path
          fill="#a5a29e"
          d="M1292 468L1350 450Q1363 443 1357 435C1350 428 1332 426 1332 402C1334 382 1362 367 1397 367C1430 367 1455 378 1475 395C1492 411 1502 433 1501 453C1500 475 1490 492 1475 507C1453 526 1413 543 1374 549Z"
        />
        <path
          fill="none"
          d="M1298 468L1376 546M924 597L959 628M595 722C599 735 609 743 622 748C645 756 672 753 691 743C735 721 780 695 827 675C865 659 900 645 952 630L1030 568Q1037 563 1044 561C1120 544 1200 529 1282 520M1292 522L1374 546M1376 546C1415 540 1451 524 1473 504M693 745V757M1486 498V510M1351 431V443M1333 408C1337 422 1352 427 1356 435"
          strokeWidth=".9"
        />
        <path fill="#716e6b" d="M1363 403L1397 384C1412 385 1432 391 1433 401L1432 408L1402 425C1387 426 1367 419 1364 411Z" />
        <path
          fill="#e2e4ed"
          stroke="none"
          d="M1368 414L1397 399C1411 399 1425 403 1428 409L1402 424C1390 425 1376 422 1368 414Z"
        />
        <path fill="none" d="M1368 414L1397 399C1411 399 1425 403 1428 409M1397 384V399M1367 412V405L1397 388C1412 388 1428 394 1429 402V408" strokeWidth=".9" />
        <ellipse cx="651" cy="721" rx="18.500" ry="11.500" fill="#a5a29e" />
        <ellipse cx="651" cy="722" rx="16.500" ry="9.500" fill="#7c7976" />
        <path d="M637 727Q651 720 665 727Q651 736 637 727Z" fill="#fbfbfd" strokeWidth=".8" />
      </g>
      <g strokeWidth="3">
        <path d="M279 986V966" stroke="#1f6a2a" />
        <path d="M279 960l5 9-5 5-5-5z" fill="#2f9142" />
        <path d="M279 986l-15 8" stroke="#20207e" />
        <path d="M257 998l6-8 5 6z" fill="#2b2bb0" />
        <path d="M279 986l15 8" stroke="#8f2323" />
        <path d="M302 998l-10-2 4-6z" fill="#d1432f" stroke="#b4311f" strokeWidth="1" />
      </g>
      <g className="text-[12px]" textAnchor="middle">
        <text x="278" y="960" fill="#3d3d3d">Y</text>
        <text x="254" y="1004" fill="#25256e">Z</text>
        <text x="303" y="1004" fill="#c43a2a">X</text>
      </g>
      <text x="250" y="1039" fill="#111" className="font-['DejaVu_Sans'] text-[14px]">
        *Isometric
      </text>
    </svg>
  );
}

function TaskPane() {
  return (
    <div className="absolute top-[30px] right-0 flex w-[25px] flex-col border border-[#1c1c1c] bg-[#2c2c2c]">
      {["home", "library", "folder", "palette", "appearance", "list"].map((n) => (
        <button
          key={n}
          aria-label={`Task pane ${n}`}
          className={`flex h-6 items-center justify-center border-b border-[#888888] last:border-b-0 ${
            n === "appearance" ? "bg-[#9a9a9a]" : ""
          }`}
        >
          <Icon name={n} className="size-[18px]" />
        </button>
      ))}
    </div>
  );
}

function Footer() {
  const steps = ["M6 2v8M2 2v8M10 2L6 6l4 4z", "M9 2L3 6l6 4z", "M3 2l6 4-6 4z", "M2 2l4 4-4 4zM9 2v8"];
  const tabs: [string, string][] = [
    ["Model", "w-[58px] pl-1"],
    ["3D Views", "w-[68px]"],
    ["Motion Study 1", "w-[107px] pr-3"],
  ];
  return (
    <footer className="shrink-0">
      <div className="flex h-[16px] bg-[#3f403f]">
        <div className="flex w-[66px] bg-[#8c8c8c]">
          {steps.map((d) => (
            <button key={d} aria-label="Scroll tabs" className="flex flex-1 items-center justify-center border-r border-[#707070]">
              <svg viewBox="0 0 12 12" className="size-3" aria-hidden="true">
                <path d={d} fill="#747474" stroke="#747474" />
              </svg>
            </button>
          ))}
        </div>
        {tabs.map(([t, w], i) => (
          <button
            key={t}
            className={`border-r border-[#777777] pb-0.5 leading-[13px] whitespace-nowrap text-white ${w} ${i === 0 ? "bg-[#3f403f] font-bold" : "bg-[#2c2c2c]"}`}
          >
            {t}
          </button>
        ))}
      </div>
      <div className="flex h-[19px] items-center bg-[#8f8f8f] text-[#f5f5f5]">
        <span className="flex-1 pl-px">SOLIDWORKS 2019 SP3.0</span>
        <span className="mr-1.5 h-4 w-px bg-[#dddddd]" />
        <span className="border-x border-[#dddddd] px-1">Editing Part</span>
        <span className="ml-4 h-4 w-px bg-[#dddddd]" />
        <button className="flex w-[120px] items-center gap-5 pl-8">
          MMGS
          <svg viewBox="0 0 6 4" className="h-[3px] w-[6px]" aria-hidden="true">
            <path d="M0 4h6L3 0z" fill="#fff" />
          </svg>
        </button>
        <button aria-label="Tags" className="mr-0.5 ml-9">
          <Icon name="tag" className="size-4" />
        </button>
      </div>
    </footer>
  );
}

export default function App() {
  return (
    <div className="relative flex h-screen flex-col overflow-hidden bg-[#464646] font-['Noto_Sans','Noto_Sans_CJK_SC',sans-serif] text-[11px] text-[#eeeeee]">
      <TitleBar />
      <Ribbon />
      <main className="flex min-h-0 flex-1 flex-col bg-white bg-[linear-gradient(to_bottom,transparent_56%,rgba(255,255,255,0.55)_63%,rgba(255,255,255,0.88)_73%,rgba(255,255,255,0.7)_100%),radial-gradient(ellipse_55%_75%_at_85%_45%,#d7dae6_0%,rgba(221,224,234,0.85)_35%,transparent_100%),radial-gradient(ellipse_95%_34%_at_38%_52%,#dfe3ed_0%,rgba(227,231,240,0.75)_45%,transparent_100%)]">
        <ViewBar />
        <div className="flex min-h-0 flex-1">
          <FeatureTree />
          <div className="relative min-w-0 flex-1">
            <Model />
            <TaskPane />
          </div>
        </div>
      </main>
      <Footer />
      <div className="pointer-events-none absolute top-0 left-[2px] z-20 flex items-start whitespace-nowrap text-[#d4d4d4] opacity-85 [text-shadow:-1px_-1px_0_#e8e8e8,2px_2px_0_#44403c]">
        <span className="font-['Noto_Sans_CJK_SC',sans-serif] text-[81px] leading-[72px]">莫西网</span>
        <span className="font-['Liberation_Mono',monospace] text-[68px] leading-[106px] [-webkit-text-stroke:1px_#d4d4d4]">www.3dmox.com</span>
      </div>
    </div>
  );
}
